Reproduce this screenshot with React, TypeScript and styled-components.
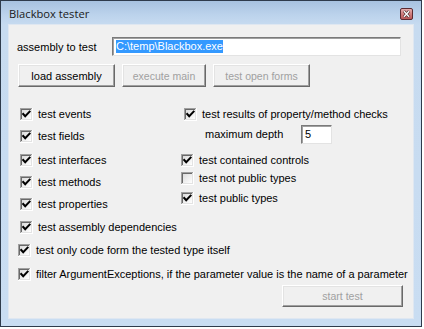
import React from "react";
import styled, { createGlobalStyle } from "styled-components";

const Global = createGlobalStyle`
  html, body { margin: 0; padding: 0; background: #ffffff; }
  body { width: 424px; height: 329px; overflow: hidden; }
`;

const Window = styled.div`
  box-sizing: border-box;
  width: 422px;
  height: 327px;
  border: 1px solid #2e3b4c;
  background: linear-gradient(to bottom, #a7c2e0 0px, #bcd3ec 14px, #c7dbf0 24px, #c9ddf2 100%);
  padding: 0 7px 7px 7px;
  display: flex;
  flex-direction: column;
`;

const TitleBar = styled.div`
  height: 23px;
  display: flex;
  align-items: center;
  justify-content: space-between;
`;

const Title = styled.span`
  font-family: "Open Sans", "Noto Sans", sans-serif;
  font-size: 11.2px;
  color: #1a1a1a;
  padding-left: 1px;
  margin-top: 1px;
`;

const CloseButton = styled.div`
  width: 13px;
  height: 12px;
  margin-right: 1px;
  margin-top: 3px;
  display: flex;
`;

const Client = styled.div`
  box-sizing: border-box;
  flex: 1;
  background: #f0f0f0;
  border: 1px solid #dfe7f1;
  display: flex;
  flex-direction: column;
  font-family: "Liberation Sans", Arial, sans-serif;
  font-size: 11px;
  color: #000;
`;

const PathRow = styled.div`
  display: flex;
  align-items: center;
  margin-top: 12px;
  height: 19px;
  padding-left: 8px;
`;

const Label = styled.span`
  width: 95px;
`;

const TextBox = styled.div<{ $width: number }>`
  box-sizing: border-box;
  width: ${(p) => p.$width}px;
  height: 19px;
  background: #fff;
  border-top: 1px solid #7a7a7a;
  border-left: 1px solid #7a7a7a;
  border-right: 1px solid #e3e3e3;
  border-bottom: 1px solid #e3e3e3;
  box-shadow: inset 1px 1px 0 #a0a0a0;
  display: flex;
  align-items: center;
  padding-left: 3px;
`;

const Selected = styled.span`
  background: #3399ff;
  color: #fff;
  line-height: 13px;
`;

const ButtonRow = styled.div`
  display: flex;
  gap: 7px;
  margin-top: 8px;
  padding-left: 9px;
`;

const Button = styled.div<{ $width: number; $disabled?: boolean }>`
  box-sizing: border-box;
  width: ${(p) => p.$width}px;
  height: 23px;
  background: #f0f0f0;
  border-top: 1px solid #ffffff;
  border-left: 1px solid #ffffff;
  border-right: 1px solid #696969;
  border-bottom: 1px solid #696969;
  box-shadow: inset -1px -1px 0 #a0a0a0, inset 1px 1px 0 #e3e3e3;
  display: flex;
  align-items: center;
  justify-content: center;
  color: ${(p) => (p.$disabled ? "#a0a0a0" : "#000")};
  font-size: ${(p) => (p.$disabled ? "10.5px" : "11px")};
`;

const Options = styled.div`
  display: flex;
  padding-left: 11px;
`;

const Column = styled.div<{ $width?: number }>`
  display: flex;
  flex-direction: column;
  width: ${(p) => (p.$width ? `${p.$width}px` : "auto")};
`;

const CheckRow = styled.div<{ $top: number; $indent?: number }>`
  display: flex;
  align-items: center;
  height: 18px;
  margin-top: ${(p) => p.$top}px;
  padding-left: ${(p) => p.$indent ?? 0}px;
  white-space: nowrap;
`;

const BoxWrap = styled.span`
  width: 13px;
  height: 13px;
  margin-right: 5px;
  display: flex;
  flex: none;
`;

const DepthRow = styled.div<{ $top: number }>`
  display: flex;
  align-items: center;
  height: 20px;
  margin-top: ${(p) => p.$top}px;
  padding-left: 24px;
`;

const DepthLabel = styled.span`
  width: 96px;
`;

const Footer = styled.div`
  display: flex;
  justify-content: flex-end;
  padding-right: 10px;
  margin-top: 2px;
`;

const StartButton = styled(Button)`
  height: 22px;
`;

function CheckBox({ checked }: { checked: boolean }) {
  return (
    <BoxWrap>
      <svg width="13" height="13" viewBox="0 0 13 13">
        <defs>
          <linearGradient id="cbg" x1="0" y1="0" x2="1" y2="1">
            <stop offset="0" stopColor="#dcdcdc" />
            <stop offset="1" stopColor="#ffffff" />
          </linearGradient>
        </defs>
        <rect x="0" y="0" width="13" height="13" fill="#ffffff" />
        <rect x="0" y="0" width="12" height="1" fill="#a0a0a0" />
        <rect x="0" y="0" width="1" height="12" fill="#a0a0a0" />
        <rect x="1" y="1" width="10" height="1" fill="#696969" />
        <rect x="1" y="1" width="1" height="10" fill="#696969" />
        <rect x="2" y="2" width="9" height="9" fill="url(#cbg)" />
        <rect x="11" y="1" width="1" height="11" fill="#e3e3e3" />
        <rect x="1" y="11" width="11" height="1" fill="#e3e3e3" />
        {checked && (
          <polyline
            points="3.2,6 5.2,8.2 9.6,3.6"
            fill="none"
            stroke="#000"
            strokeWidth="2"
            strokeLinecap="square"
          />
        )}
      </svg>
    </BoxWrap>
  );
}

function Check({
  label,
  checked = true,
  top,
  indent,
}: {
  label: string;
  checked?: boolean;
  top: number;
  indent?: number;
}) {
  return (
    <CheckRow $top={top} $indent={indent}>
      <CheckBox checked={checked} />
      <span>{label}</span>
    </CheckRow>
  );
}

export default function App() {
  return (
    <>
      <Global />
      <Window>
        <TitleBar>
          <Title>Blackbox tester</Title>
          <CloseButton>
            <svg width="13" height="12" viewBox="0 0 13 12">
              <defs>
                <linearGradient id="clg" x1="0" y1="0" x2="0" y2="1">
                  <stop offset="0" stopColor="#e8b4b4" />
                  <stop offset="0.5" stopColor="#cf7c7c" />
                  <stop offset="1" stopColor="#b95555" />
                </linearGradient>
              </defs>
              <rect x="0.5" y="0.5" width="12" height="11" rx="1.5" fill="url(#clg)" stroke="#5a2a30" />
              <path d="M4 3.2 L9 8.8 M9 3.2 L4 8.8" stroke="#3a2020" strokeWidth="2.6" />
              <path d="M4 3.2 L9 8.8 M9 3.2 L4 8.8" stroke="#ffffff" strokeWidth="1.4" />
            </svg>
          </CloseButton>
        </TitleBar>
        <Client>
          <PathRow>
            <Label>assembly to test</Label>
            <TextBox $width={289}>
              <Selected>C:\temp\Blackbox.exe</Selected>
            </TextBox>
          </PathRow>
          <ButtonRow>
            <Button $width={97}>load assembly</Button>
            <Button $width={84} $disabled>
              execute main
            </Button>
            <Button $width={97} $disabled>
              test open forms
            </Button>
          </ButtonRow>
          <Options>
            <Column $width={161}>
              <Check label="test events" top={18} />
              <Check label="test fields" top={4} />
              <Check label="test interfaces" top={6} />
              <Check label="test methods" top={4} />
              <Check label="test properties" top={4} />
              <Check label="test assembly dependencies" top={5} />
            </Column>
            <Column>
              <Check label="test results of property/method checks" top={18} indent={3} />
              <DepthRow $top={1}>
                <DepthLabel>maximum depth</DepthLabel>
                <TextBox $width={31}>5</TextBox>
              </DepthRow>
              <Check label="test contained controls" top={7} />
              <Check label="test not public types" checked={false} top={0} />
              <Check label="test public types" top={2} />
            </Column>
          </Options>
          <Check label="test only code form the tested type itself" top={5} indent={9} />
          <Check
            label="filter ArgumentExceptions, if the parameter value is the name of a parameter"
            top={6}
            indent={9}
          />
          <Footer>
            <StartButton $width={121} $disabled>
              start test
            </StartButton>
          </Footer>
        </Client>
      </Window>
    </>
  );
}
